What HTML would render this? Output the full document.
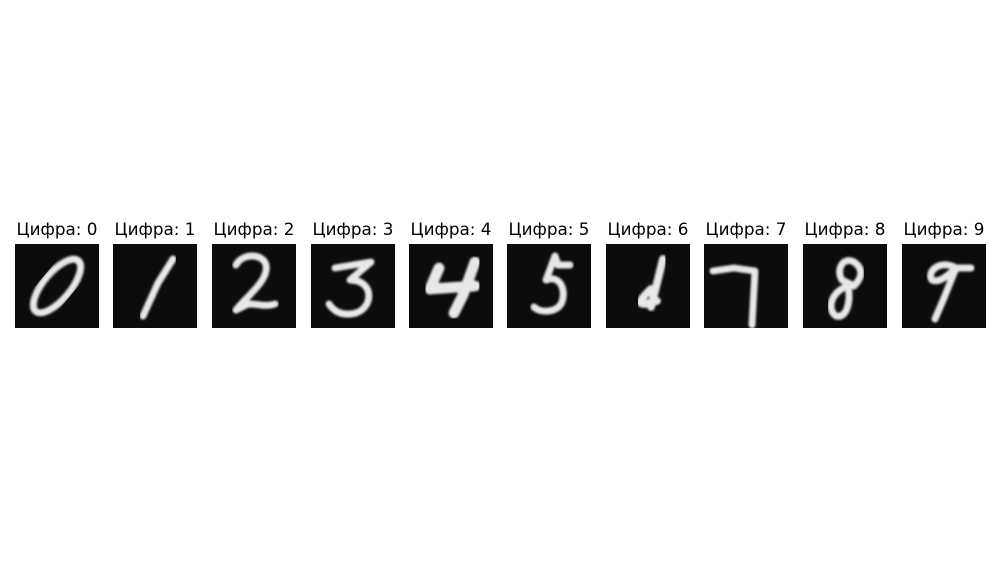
<!DOCTYPE html>
<html><head><meta charset="utf-8"><style>
body{margin:0;width:1000px;height:572px;background:#fff;position:relative;overflow:hidden;font-family:"DejaVu Sans","Liberation Sans",sans-serif}
.c{position:absolute;top:219px;width:84px}
.t{position:absolute;left:-30px;width:144px;text-align:center;font-size:16.8px;line-height:20px;color:#000;top:0}
svg.d{position:absolute;top:25px;left:0;width:84px;height:84px;background:#0c0c0c}
path,ellipse,line{fill:none;stroke:#e8e8e8;stroke-width:2.3;stroke-linecap:round;stroke-linejoin:round;filter:url(#b)}
</style></head><body>
<svg width="0" height="0" style="position:absolute;left:0;top:0"><defs><filter id="b"><feGaussianBlur stdDeviation="0.35"/></filter></defs></svg>
<div class="c" style="left:15px"><div class="t">Цифра: 0</div><svg class="d" viewBox="0 0 28 28"><ellipse cx="14" cy="14" rx="4.5" ry="11" transform="rotate(40 14 14)"/></svg></div>
<div class="c" style="left:113px"><div class="t">Цифра: 1</div><svg class="d" viewBox="0 0 28 28"><path d="M20 5 L15 13 L10 24"/></svg></div>
<div class="c" style="left:212px"><div class="t">Цифра: 2</div><svg class="d" viewBox="0 0 28 28"><path d="M8 7 C10 3 17 3 18 7 C19 12 12 17 8 22 L12 20 C16 20 18 21 21 20"/></svg></div>
<div class="c" style="left:311px"><div class="t">Цифра: 3</div><svg class="d" viewBox="0 0 28 28"><path d="M8 8 L20 6 L13 12 C21 12 21 21 15 23 C11 24 8 23 6 20"/></svg></div>
<div class="c" style="left:409px"><div class="t">Цифра: 4</div><svg class="d" viewBox="0 0 28 28"><path d="M10 8 L7 15 L22 14 M22 6 L18 17 L15 23" style="stroke-width:3.6"/></svg></div>
<div class="c" style="left:507px"><div class="t">Цифра: 5</div><svg class="d" viewBox="0 0 28 28"><path d="M21 7 L17 7 L16 4 L13 12 C18 10 20 16 18 20 C16 23 11 23 9 21"/></svg></div>
<div class="c" style="left:606px"><div class="t">Цифра: 6</div><svg class="d" viewBox="0 0 28 28"><path d="M19 5 L15 21 M15 15 C12 18 10 20 13 20 L17 19" style="stroke-width:2.6"/></svg></div>
<div class="c" style="left:704px"><div class="t">Цифра: 7</div><svg class="d" viewBox="0 0 28 28"><path d="M3 9 L10 8 L17 9 L16 27"/></svg></div>
<div class="c" style="left:803px"><div class="t">Цифра: 8</div><svg class="d" viewBox="0 0 28 28"><path d="M17 6 C13 4 11 9 13 12 L17 14 C20 11 20 8 17 6 Z M15 14 C9 16 8 22 11 24 C15 25 16 18 15 14 Z"/></svg></div>
<div class="c" style="left:902px"><div class="t">Цифра: 9</div><svg class="d" viewBox="0 0 28 28"><path d="M18 8 C13 5 8 9 10 12 C12 13 15 11 18 8 L23 8 M18 8 L14 18 L11 25"/></svg></div>
</body></html>
